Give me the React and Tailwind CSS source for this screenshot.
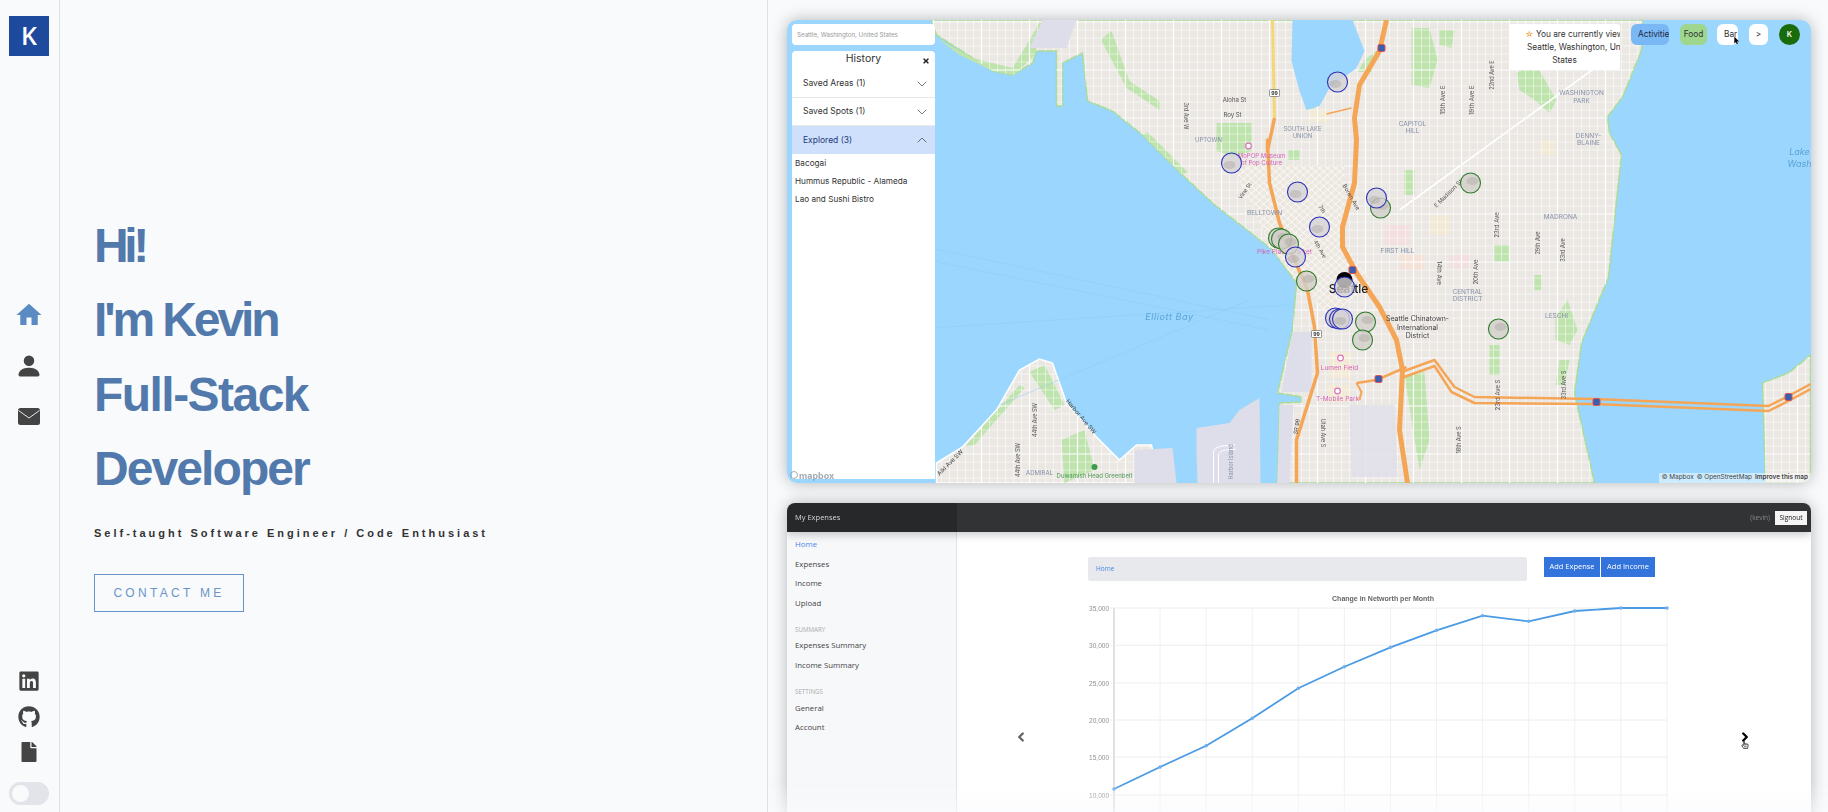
import React from 'react';
import { FaLinkedin, FaGithub, FaFile, FaTimes, FaRegHandPointer, FaMousePointer } from 'react-icons/fa';
import { MdHome } from 'react-icons/md';
import { BsPersonFill } from 'react-icons/bs';
import { ChevronDown, ChevronUp, ChevronLeft, ChevronRight } from 'lucide-react';

// map data is in page coordinates, the svg viewBox starts at the card's corner
const land = '932,20 937,35 973,58 993,71 1013,75 1033,63 1037,51 1057,51 1057,106 1063,106 1063,63 1083,53 1088,101 1113,111 1143,135 1183,175 1213,203 1245,228 1273,250 1297,283 1293,330 1278,393 1302,397 1302,402 1280,403 1278,483 1595,483 1575,393 1582,343 1609,277 1616,210 1622,155 1610,133 1608,117 1623,97 1630,80 1642,50 1643,20';
const westSeattle = '937,463 963,447 997,410 1020,370 1040,359 1053,363 1067,403 1097,437 1120,460 1137,445 1152,445 1160,483 937,483';
const mercer = '1766,483 1763,383 1789,373 1811,355 1811,483';
const lake = '1293,20 1292,61 1300,91 1307,110 1320,106 1330,88 1357,68 1365,51 1353,20';
const harborIsland = '1197,428 1230,423 1240,410 1260,398 1261,483 1198,483 1197,453';
const pigeonPoint = '1135,450 1173,448 1177,483 1135,483';

const parks = [
  '1217,123 1252,123 1252,151 1235,157 1217,151',
  '1412,28 1430,28 1438,60 1430,88 1412,85',
  '1517,73 1535,62 1557,100 1550,113 1535,100 1520,90',
  '1365,60 1378,50 1372,72 1358,72',
  '1440,30 1455,30 1452,48 1440,45',
  '1289,150 1300,150 1300,160 1289,160',
  '1405,170 1415,170 1415,195 1405,195',
  '1495,245 1510,245 1510,262 1495,262',
  '1535,275 1542,275 1542,290 1535,290',
  '1556,318 1568,300 1578,330 1570,345 1556,340',
  '1560,360 1570,360 1565,385 1556,385',
  '1405,375 1425,372 1430,440 1420,470 1412,420',
  '1490,345 1500,345 1500,375 1490,375',
  '1030,372 1045,365 1065,405 1055,410',
  '1062,440 1085,430 1095,470 1065,483',
  '965,447 1020,385 1025,388 975,445',
  '937,38 973,58 1013,68 1030,40 1040,22 1045,22 1035,55 1015,75 993,71 960,55',
  '1103,38 1112,31 1130,81 1160,101 1160,110 1127,88 1102,41',
  '1306,92 1316,92 1316,108 1306,110',
  '1183,175 1143,135 1148,132 1188,172',
];

const blocks = [
  ['1385,225 1410,225 1410,245 1385,245', '#f4dfe0'],
  ['1400,255 1425,255 1425,270 1400,270', '#f4e2d8'],
  ['1430,215 1450,215 1450,235 1430,235', '#f2ead6'],
  ['1450,255 1470,255 1470,268 1450,268', '#f4dfe0'],
  ['1310,110 1330,110 1330,122 1310,122', '#f2ead6'],
  ['1540,140 1555,140 1555,155 1540,155', '#f2ead6'],
  ['1330,352 1352,352 1352,378 1330,378', '#f2ead6'],
  ['1328,385 1350,385 1350,402 1328,402', '#f2ead6'],
];

const freeways = [
  { pts: '1387,20 1380,51 1360,85 1355,118 1357,140 1355,183 1343,227 1343,247 1357,273 1380,307 1397,340 1403,370 1400,430 1408,483', w: 5 },
  { pts: '1275,118 1268,151 1268,140 1270,183 1280,223 1296,262 1308,290 1315,327 1318,373 1297,440 1297,483', w: 3.5 },
  { pts: '1402,372 1435,360 1455,387 1475,397 1595,399 1769,406 1789,396 1811,384', w: 2.5 },
  { pts: '1402,378 1435,366 1452,392 1475,403 1595,404 1769,411 1789,401 1811,389', w: 2.5 },
  { pts: '1357,383 1377,380 1407,367', w: 2.5 },
  { pts: '1357,383 1362,392 1360,400', w: 2 },
  { pts: '1327,114 1352,108', w: 1.5 },
];

const shields = [[1382, 48], [1379, 379], [1597, 402], [1789, 397], [1353, 270]];
const pinkPins = [[1341, 358], [1338, 391], [1249, 146]];

const blueMarkers = [[1338, 82], [1232, 163], [1298, 192], [1377, 198], [1320, 227], [1296, 257], [1336, 318], [1340, 319], [1343, 319], [1345, 287]];
const greenMarkers = [[1471, 183], [1381, 208], [1279, 238], [1282, 239], [1289, 244], [1307, 281], [1366, 322], [1363, 340], [1499, 329]];

const gridX = Array.from({ length: 128 }, (_, i) => 790 + i * 8);
const gridY = Array.from({ length: 58 }, (_, i) => 22 + i * 8);
const diag = Array.from({ length: 44 }, (_, i) => i * 8 - 180);

// [text, x, y, size, colour, rotate]
const labels = [
  ['Aloha St', 1235, 102, 6, '#555', 0],
  ['Roy St', 1233, 117, 6, '#555', 0],
  ['SOUTH LAKE', 1303, 131, 6, '#8590a8', 0],
  ['UNION', 1303, 138, 6, '#8590a8', 0],
  ['UPTOWN', 1209, 142, 6, '#8590a8', 0],
  ['CAPITOL', 1413, 126, 6.5, '#8590a8', 0],
  ['HILL', 1413, 133, 6.5, '#8590a8', 0],
  ['WASHINGTON', 1582, 95, 6.5, '#8590a8', 0],
  ['PARK', 1582, 103, 6.5, '#8590a8', 0],
  ['DENNY-', 1589, 138, 6.5, '#8590a8', 0],
  ['BLAINE', 1589, 145, 6.5, '#8590a8', 0],
  ['BELLTOWN', 1265, 215, 6.5, '#8590a8', 0],
  ['FIRST HILL', 1398, 253, 6.5, '#8590a8', 0],
  ['MADRONA', 1561, 219, 6.5, '#8590a8', 0],
  ['CENTRAL', 1468, 294, 6.5, '#8590a8', 0],
  ['DISTRICT', 1468, 301, 6.5, '#8590a8', 0],
  ['LESCHI', 1557, 318, 6.5, '#8590a8', 0],
  ['Seattle Chinatown-', 1418, 321, 7, '#444', 0],
  ['International', 1418, 330, 7, '#444', 0],
  ['District', 1418, 338, 7, '#444', 0],
  ['Lumen Field', 1340, 370, 6.5, '#d563b8', 0],
  ['T-Mobile Park', 1338, 401, 6.5, '#d563b8', 0],
  ['Pike Place Market', 1285, 254, 6.5, '#d563b8', 0],
  ['MoPOP Museum', 1262, 158, 6, '#d563b8', 0],
  ['of Pop Culture', 1262, 165, 6, '#d563b8', 0],
  ['ADMIRAL', 1040, 475, 6, '#8590a8', 0],
  ['Duwamish Head Greenbelt', 1095, 478, 6, '#4f9a5a', 0],
  ['Vine St', 1247, 192, 5.5, '#555', -55],
  ['Boren Ave', 1350, 198, 6, '#555', 60],
  ['E Madison St', 1450, 195, 6, '#555', -45],
  ['7th', 1321, 210, 5.5, '#555', 60],
  ['4th Ave', 1319, 250, 5.5, '#555', 60],
  ['3rd Ave W', 1184, 116, 5.5, '#555', 90],
  ['15th Ave E', 1445, 100, 6, '#555', -90],
  ['19th Ave E', 1474, 100, 6, '#555', -90],
  ['22nd Ave E', 1494, 75, 5.5, '#555', -90],
  ['23rd Ave', 1499, 225, 6, '#555', -90],
  ['14th Ave', 1437, 273, 6, '#555', 90],
  ['20th Ave', 1478, 272, 6, '#555', -90],
  ['29th Ave', 1540, 243, 5.5, '#555', -90],
  ['33rd Ave', 1565, 250, 5.5, '#555', -90],
  ['23rd Ave S', 1500, 395, 6, '#555', -90],
  ['33rd Ave S', 1566, 385, 5.5, '#555', -90],
  ['18th Ave S', 1461, 440, 5.5, '#555', -90],
  ['Utah Ave S', 1321, 433, 5.5, '#555', 90],
  ['SR 99', 1299, 427, 5.5, '#444', -80],
  ['44th Ave SW', 1037, 420, 5.5, '#555', -90],
  ['44th Ave SW', 1020, 460, 5.5, '#555', -90],
  ['Harbor Ave SW', 1080, 418, 6, '#444', 50],
  ['Alki Ave SW', 952, 464, 6, '#444', -45],
  ['Harbor Island', 1233, 462, 5.5, '#8590a8', -90],
];

function SeattleMap() {
  return (
    <svg viewBox="788 20 1023 463" className="block w-full h-full bg-[#9ad6fd] blur-[0.5px]">
      <defs>
        <clipPath id="landClip">
          <polygon points={land} />
          <polygon points={westSeattle} />
          <polygon points={mercer} />
        </clipPath>
        <clipPath id="downtown">
          <polygon points="1232,165 1345,165 1345,245 1375,285 1330,315 1300,285 1273,250" />
        </clipPath>
      </defs>

      <polygon points={land} fill="#ebe7e3" stroke="#a9dc98" strokeWidth="1.5" />
      <polygon points={westSeattle} fill="#ebe7e3" stroke="#fff" strokeWidth="1.5" />
      <polygon points={mercer} fill="#ebe7e3" stroke="#a9dc98" strokeWidth="1.5" />

      {blocks.map(([p, c]) => (
        <polygon key={p} points={p} fill={c} />
      ))}
      {parks.map((p) => (
        <polygon key={p} points={p} fill="#bfe3ac" />
      ))}

      <g clipPath="url(#landClip)" stroke="#fff">
        {gridX.map((x, i) => (
          <line key={x} x1={x} y1="20" x2={x} y2="483" strokeWidth={i % 6 === 0 ? 1.2 : 0.5} />
        ))}
        {gridY.map((y, i) => (
          <line key={y} x1="788" y1={y} x2="1811" y2={y} strokeWidth={i % 6 === 0 ? 1.2 : 0.5} />
        ))}
        <line x1="1400" y1="210" x2="1620" y2="50" strokeWidth="1.6" />
      </g>

      {/* flat lavender industrial areas and the lake sit above the street grid */}
      <polygon points={lake} fill="#9ad6fd" />
      <polygon points={harborIsland} fill="#dedeea" />
      <polygon points={pigeonPoint} fill="#dedeea" />
      <polygon points="1030,48 1043,20 1077,20 1067,48" fill="#dedeea" />
      <polygon points="1293,332 1312,332 1312,392 1282,392" fill="#dedeea" />
      <polygon points="1280,405 1294,405 1290,483 1278,483" fill="#dedeea" />
      <polygon points="1350,405 1395,405 1398,477 1352,477" fill="#e0dfe9" fillOpacity="0.8" />
      <path d="M1214 483 V452 Q1214 448 1222 446 L1236 445 M1219 483 V455 Q1219 451 1226 450 L1236 449" stroke="#fff" fill="none" strokeWidth="1" />

      <g clipPath="url(#downtown)" stroke="#fff" strokeWidth="0.8">
        <polygon points="1232,165 1345,165 1345,245 1375,285 1330,315 1300,285 1273,250" fill="#ece7df" stroke="none" />
        {diag.map((d) => (
          <g key={d}>
            <line x1={1200 + d} y1="150" x2={1400 + d} y2="330" />
            <line x1={1400 + d} y1="150" x2={1200 + d} y2="330" />
          </g>
        ))}
      </g>

      {freeways.map((f) => (
        <polyline key={f.pts} points={f.pts} fill="none" stroke="#f5a556" strokeWidth={f.w} strokeLinejoin="round" />
      ))}
      <polyline points="1273,20 1275,118" fill="none" stroke="#f4d874" strokeWidth="3" />

      <path d="M1000 405 L1250 300 M800 220 L1270 320 M880 250 L1270 330 M900 330 L1290 305" stroke="#8fcdf5" strokeWidth="0.5" fill="none" />

      {shields.map(([x, y]) => (
        <rect key={`s${x}`} x={x - 3.5} y={y - 3.5} width="7" height="7" rx="1.5" fill="#3b5fb0" stroke="#d9534f" strokeWidth="1" />
      ))}
      {[[1275, 93], [1317, 334]].map(([x, y]) => (
        <g key={`h${x}`}>
          <rect x={x - 5} y={y - 3.5} width="10" height="7" rx="1" fill="#fff" stroke="#555" strokeWidth="0.6" />
          <text x={x} y={y + 2} fontSize="5" fontWeight="700" fill="#333" textAnchor="middle" fontFamily="Inter, sans-serif">99</text>
        </g>
      ))}
      {pinkPins.map(([x, y]) => (
        <circle key={`p${x}`} cx={x} cy={y} r="2.8" fill="#fff" stroke="#df6fc0" strokeWidth="1.2" />
      ))}
      <circle cx="1095" cy="467" r="3" fill="#3f9a4d" />

      {labels.map(([text, x, y, size, color, rotate]) => (
        <text
          key={text + x}
          x={x}
          y={y}
          fontSize={size}
          fill={color}
          textAnchor="middle"
          fontFamily="Inter, sans-serif"
          transform={rotate ? `rotate(${rotate} ${x} ${y})` : undefined}
        >
          {text}
        </text>
      ))}
      <text x="1170" y="320" fontSize="9" fill="#5ba4d6" fontStyle="italic" textAnchor="middle" fontFamily="Inter, sans-serif" letterSpacing="0.6">Elliott Bay</text>
      <text x="1800" y="155" fontSize="9" fill="#5ba4d6" fontStyle="italic" textAnchor="middle" fontFamily="Inter, sans-serif">Lake</text>
      <text x="1800" y="167" fontSize="9" fill="#5ba4d6" fontStyle="italic" textAnchor="middle" fontFamily="Inter, sans-serif">Wash</text>
      <text x="1349" y="293" fontSize="12" fill="#222" fontWeight="500" textAnchor="middle" fontFamily="Inter, sans-serif">Seattle</text>

      <circle cx="1345" cy="280" r="8" fill="#000" />
      {greenMarkers.map(([x, y]) => (
        <g key={`g${x}${y}`}>
          <circle cx={x} cy={y} r="10" fill="#d2cfcb" fillOpacity="0.8" stroke="#2f7a2b" strokeWidth="1.1" />
          <ellipse cx={x + 2} cy={y - 2} rx="6" ry="4" fill="#a39c94" fillOpacity="0.35" />
        </g>
      ))}
      {blueMarkers.map(([x, y]) => (
        <g key={`b${x}${y}`}>
          <circle cx={x} cy={y} r="10" fill="#d6d3d6" fillOpacity="0.8" stroke="#2a2fb8" strokeWidth="1.1" />
          <ellipse cx={x - 2} cy={y + 2} rx="6" ry="4" fill="#a39c98" fillOpacity="0.35" />
        </g>
      ))}
    </svg>
  );
}

function MapCard() {
  const row = 'flex items-center justify-between h-7 pl-[11px] pr-[5px] text-[8.5px] text-[#333]';
  return (
    <div className="relative shrink-0 h-[463px] rounded-[10px] overflow-hidden shadow-[0_0_16px_rgba(0,0,0,0.28)] font-['Inter',sans-serif]">
      <SeattleMap />

      <div className="absolute left-[5px] top-[4px] w-[143px] flex flex-col gap-[6px]">
        <div className="h-[21px] bg-white rounded-sm flex items-center pl-[5px] text-[6.2px] text-[#999]">Seattle, Washington, United States</div>
        <div className="relative h-[428px] bg-white rounded-t-sm">
          <div className="h-[19px] text-center text-[10.5px] leading-[15px] text-[#333]">History</div>
          <FaTimes className="absolute right-[5px] top-[6px] text-[#222]" size={8} />
          <div className={`${row} border-b border-[#e8e8e8]`}>
            <span>Saved Areas (1)</span>
            <ChevronDown size={16} strokeWidth={1} />
          </div>
          <div className={`${row} border-b border-[#e8e8e8]`}>
            <span>Saved Spots (1)</span>
            <ChevronDown size={16} strokeWidth={1} />
          </div>
          <div className={`${row} bg-[#cfe0fc]`}>
            <span className="text-[#1e3a7a]">Explored (3)</span>
            <ChevronUp size={16} strokeWidth={1} />
          </div>
          <div className="pl-[3px] text-[8.2px] leading-[18px] text-[#333]">
            <div>Bacogai</div>
            <div>Hummus Republic - Alameda</div>
            <div>Lao and Sushi Bistro</div>
          </div>
        </div>
      </div>

      <div className="absolute left-[722px] top-[4px] flex items-start text-[8.3px] text-[#333]">
        <div className="w-[111px] h-[46px] bg-white rounded-[3px] overflow-hidden text-center leading-[12.8px] pt-[4px] whitespace-nowrap">
          <div className="pl-[16px] text-left"><span className="text-[#f0a030]">☆</span> You are currently viewing</div>
          <div className="pl-[18px] text-left">Seattle, Washington, United</div>
          <div>States</div>
        </div>
        <div className="ml-[11px] w-[38px] h-[21px] bg-[#7ab8f5] rounded-md overflow-hidden flex items-center pl-[7px] whitespace-nowrap text-[#1e2a44]">Activities</div>
        <div className="ml-[11px] w-[27px] h-[21px] bg-[#9dd68c] rounded-md flex items-center justify-center">Food</div>
        <div className="ml-[10px] w-[21px] h-[21px] bg-white rounded-md overflow-hidden flex items-center pl-[7px]">Bar</div>
        <div className="ml-[11px] w-[19px] h-[21px] bg-white rounded-md flex items-center justify-center">&gt;</div>
        <div className="ml-[11px] w-[21px] h-[21px] bg-[#1a6b0a] rounded-full flex items-center justify-center text-white text-[7.5px] font-semibold">K</div>
      </div>
      <FaMousePointer className="absolute left-[946px] top-[17px] text-black" size={7} />

      <div className="absolute left-[3px] bottom-[1px] flex items-center gap-[1px] text-[9px] font-bold text-[#8a96a0] opacity-80">
        <span className="w-[8px] h-[8px] rounded-full border border-[#8a96a0]" />
        mapbox
      </div>
      <div className="absolute right-0 bottom-0 h-[10px] px-[3px] bg-white/50 flex items-center gap-[3px] text-[6.4px] text-[#444] whitespace-nowrap">
        <span>© Mapbox</span>
        <span>© OpenStreetMap</span>
        <span className="font-semibold">Improve this map</span>
      </div>
    </div>
  );
}

const linePoints = [789, 767, 745.7, 718.3, 688.3, 666.7, 647.3, 630.3, 615.7, 621.3, 611, 608, 608].map((y, i) => [1115 + i * 46.08, y]);
const ticks = [[608, '35,000'], [645.3, '30,000'], [683, '25,000'], [720, '20,000'], [757, '15,000'], [795, '10,000']];

function NetworthChart() {
  return (
    <svg viewBox="1085 592 600 220" className="block w-[600px] h-[220px] -ml-[4px] mt-[11px]">
      <text x="1384" y="601" fontSize="7" fontWeight="700" fill="#666" textAnchor="middle" fontFamily="Liberation Sans, sans-serif">Change in Networth per Month</text>
      {linePoints.map(([x]) => (
        <line key={x} x1={x} y1="608" x2={x} y2="812" stroke="#ebebeb" strokeWidth="0.7" />
      ))}
      <line x1="1115" y1="608" x2="1115" y2="812" stroke="#c8c8c8" strokeWidth="1" />
      {ticks.map(([y, label]) => (
        <g key={label}>
          <line x1="1111" y1={y} x2="1668" y2={y} stroke="#ececec" strokeWidth="0.9" />
          <text x="1110" y={y + 2.5} fontSize="6.5" fill="#909090" textAnchor="end" fontFamily="Liberation Sans, sans-serif">{label}</text>
        </g>
      ))}
      <polyline points={linePoints.map((p) => p.join(',')).join(' ')} fill="none" stroke="#4a9ae4" strokeWidth="1.8" />
      {linePoints.map(([x, y]) => (
        <circle key={x} cx={x} cy={y} r="1.8" fill="#6fb0ea" />
      ))}
    </svg>
  );
}

function ExpensesCard() {
  const link = 'h-[19.6px] flex items-center text-[7.8px]';
  const group = 'h-[21px] flex items-end text-[6.2px] text-[#aaa]';
  return (
    <div className="relative shrink-0 h-[330px] rounded-t-[8px] overflow-hidden bg-white shadow-[0_0_16px_rgba(0,0,0,0.28)] font-['Open_Sans',sans-serif] blur-[0.3px]">
      <div className="flex h-[29px] bg-[#323335] shadow-[0_3px_8px_rgba(0,0,0,0.2)] relative z-10">
        <div className="w-[170px] bg-[#27282a] flex items-center pl-[8px] text-[7.5px] text-[#d5d5d5]">My Expenses</div>
        <div className="flex-1 flex items-center justify-end gap-[5px] pr-[4px]">
          <span className="text-[6.5px] text-[#888]">(kevin)</span>
          <span className="w-[32px] h-[14px] bg-[#f5f5f5] flex items-center justify-center text-[6.5px] text-[#222]">Signout</span>
        </div>
      </div>
      <div className="flex h-[301px]">
        <div className="w-[170px] bg-[#f7f8fa] border-r border-[#e2e2e2] pl-[8px] pt-[3px] text-[#444]">
          <div className={`${link} text-[#4a86e8]`}>Home</div>
          <div className={link}>Expenses</div>
          <div className={link}>Income</div>
          <div className={link}>Upload</div>
          <div className={group}>SUMMARY</div>
          <div className={`${link} mt-[2px]`}>Expenses Summary</div>
          <div className={link}>Income Summary</div>
          <div className={group}>SETTINGS</div>
          <div className={`${link} mt-[2px]`}>General</div>
          <div className={link}>Account</div>
        </div>
        <div className="flex-1 pl-[131px] pt-[25px]">
          <div className="flex items-start">
            <div className="w-[439px] h-[24px] bg-[#e8e9ed] rounded-[2px] flex items-center pl-[8px] text-[6.5px] text-[#4a86e8]">Home</div>
            <div className="ml-[17px] w-[56px] h-[20px] bg-[#3273dc] flex items-center justify-center text-[7.5px] text-white">Add Expense</div>
            <div className="ml-[1px] w-[54px] h-[20px] bg-[#3273dc] flex items-center justify-center text-[7.5px] text-white">Add Income</div>
          </div>
          <NetworthChart />
        </div>
      </div>
      <ChevronLeft className="absolute left-[227px] top-[227px] text-[#666]" size={14} strokeWidth={4} />
      <ChevronRight className="absolute left-[951px] top-[227px] text-black" size={14} strokeWidth={4} />
      <FaRegHandPointer className="absolute left-[954px] top-[238px] text-[#333]" size={8} />
    </div>
  );
}

export default function App() {
  return (
    <div className="flex h-screen overflow-hidden bg-[#f9fafc] font-['Liberation_Sans',Arial,sans-serif]">
      {/* SIDE NAV */}
      <aside className="w-[60px] shrink-0 h-full border-r border-[#dfe1e5] flex flex-col items-start pl-[9px]">
        <div className="mt-4 w-10 h-10 bg-[#1e4a9e] flex items-center justify-center text-white text-[25px] font-semibold font-['Open_Sans',sans-serif]">K</div>
        <nav className="flex flex-col items-center w-10 mt-[244px] text-[#444]">
          <MdHome size={30} className="text-[#5b8bc3]" />
          <BsPersonFill size={28} className="mt-[22px]" />
          <svg viewBox="0 0 22 17" className="w-[22px] h-[17px] mt-[28px]">
            <rect width="22" height="17" rx="2.5" fill="#444" />
            <polyline points="0.5,2.5 11,10 21.5,2.5" fill="none" stroke="#f9fafc" strokeWidth="0.9" />
          </svg>
        </nav>
        <div className="flex flex-col items-center w-10 gap-[14px] mt-auto text-[#444]">
          <FaLinkedin size={22} />
          <FaGithub size={22} />
          <FaFile size={20} />
        </div>
        <div className="mt-[20px] mb-[7px] w-10 h-[23px] rounded-full bg-[#e2e4ea] flex items-center pl-[3px]">
          <div className="w-[17px] h-[17px] rounded-full bg-[#f9fafc]" />
        </div>
      </aside>

      {/* INTRO */}
      <section className="w-[708px] shrink-0 h-full border-r border-[#dfe1e5] pl-[34px] pt-[209px]">
        <h1 className="text-[48px] leading-[74.4px] font-bold text-[#5279ac]">
          <div className="tracking-[-0.09em]">Hi!</div>
          <div className="tracking-[-0.065em]">I'm Kevin</div>
          <div className="tracking-[-0.032em]">Full-Stack</div>
          <div className="tracking-[-0.04em]">Developer</div>
        </h1>
        <p className="mt-[18px] text-[11px] font-bold tracking-[3px] text-[#333]">Self-taught Software Engineer / Code Enthusiast</p>
        <button className="mt-[33px] w-[150px] h-[38px] border border-[#6a94c9] text-[12px] tracking-[3.3px] text-[#6a94c9]">CONTACT ME</button>
      </section>

      {/* PROJECTS */}
      <section className="relative flex-1 h-full overflow-hidden pl-[19px] pr-[17px] pt-5 flex flex-col gap-5">
        <MapCard />
        <ExpensesCard />
        <div className="absolute left-0 right-0 bottom-0 h-[30px] bg-gradient-to-b from-transparent to-[#f9fafc]/60" />
      </section>
    </div>
  );
}
